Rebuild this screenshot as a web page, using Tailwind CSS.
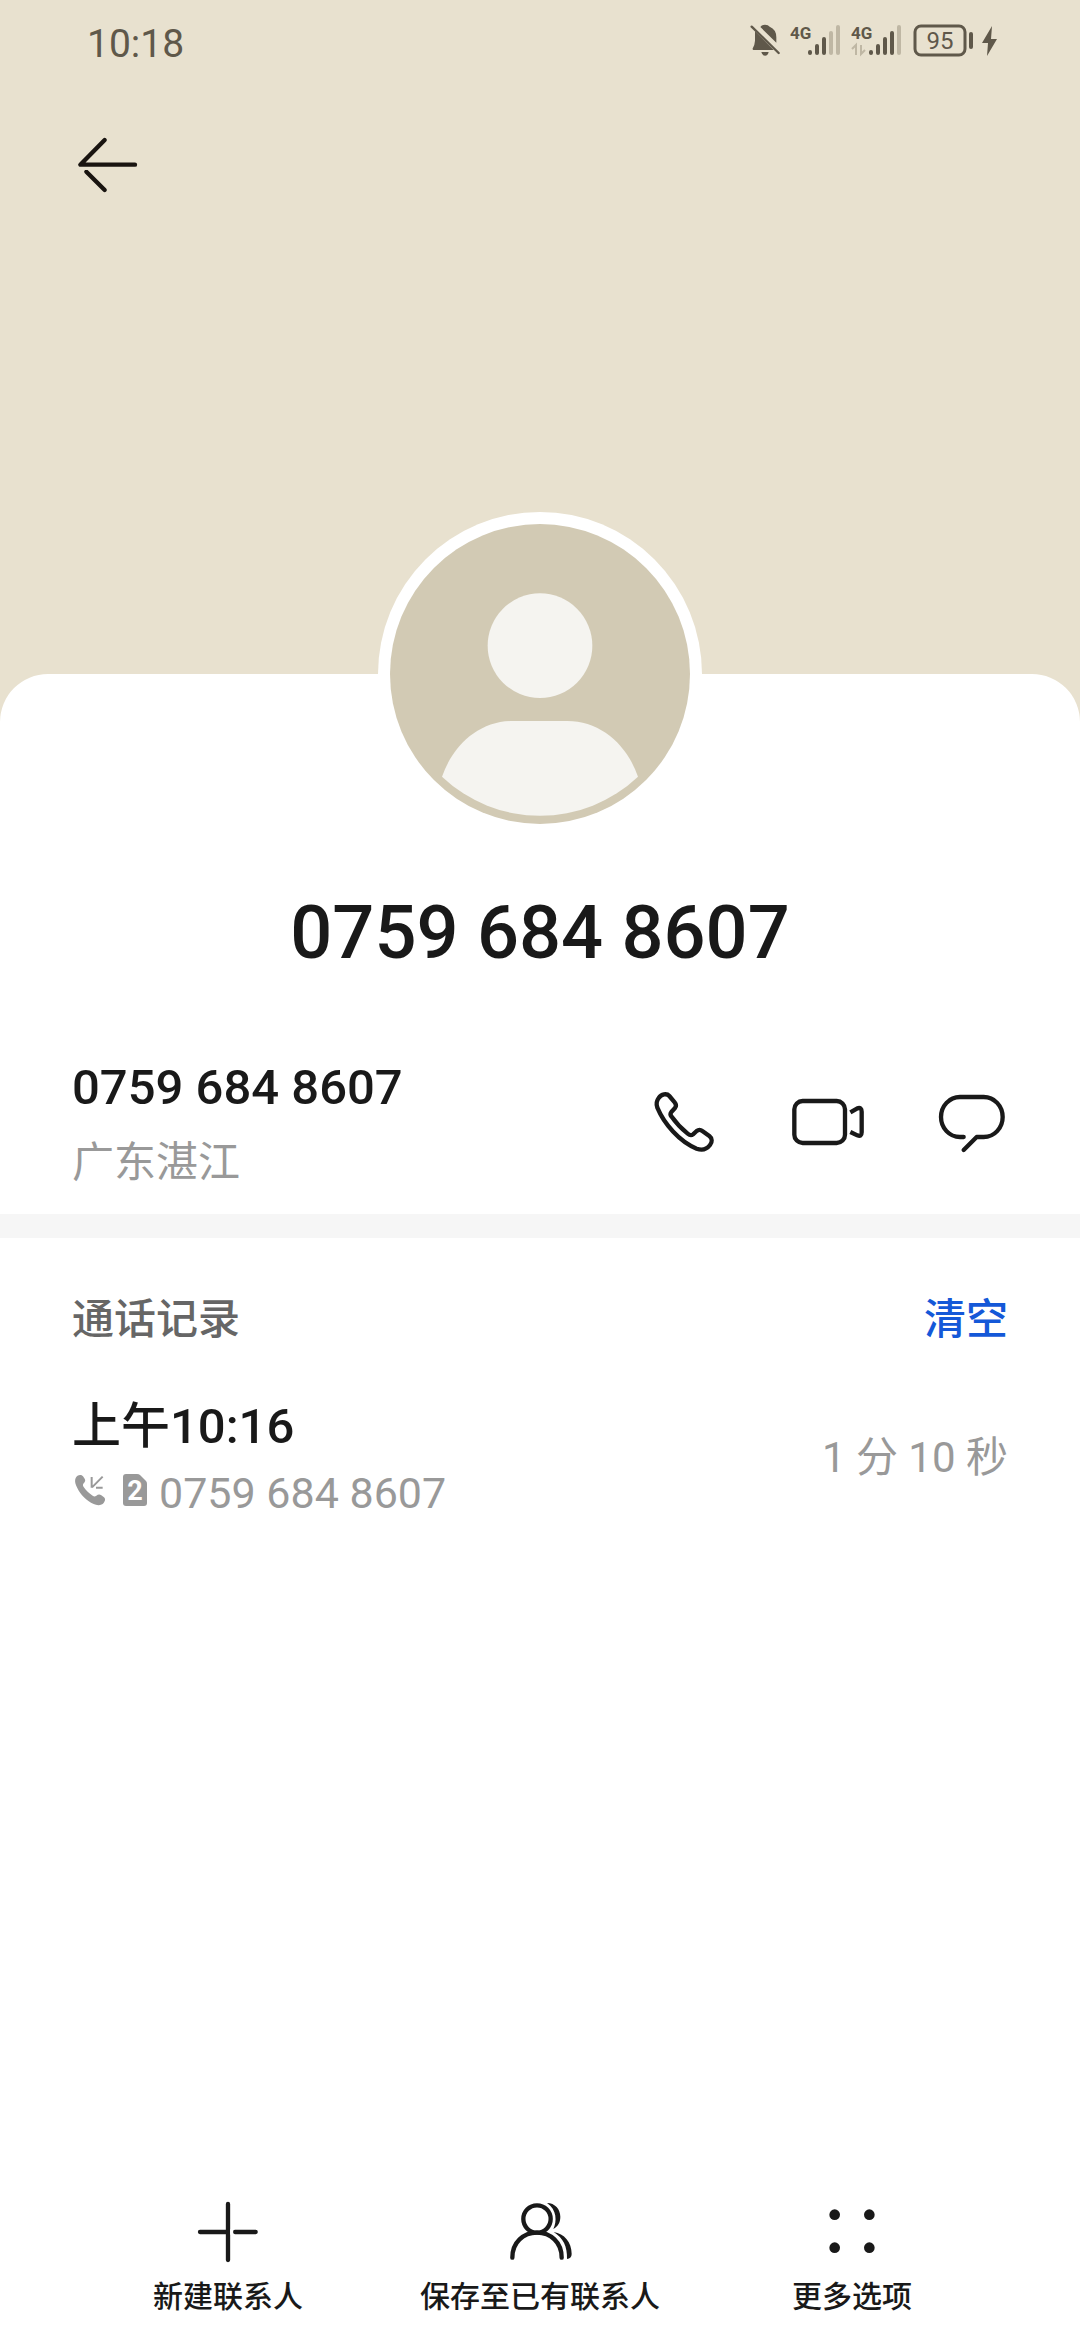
<!DOCTYPE html>
<html lang="zh-CN">
<head>
  <meta charset="UTF-8">
  <meta name="viewport" content="width=device-width, initial-scale=1.0">
  <script src="https://cdn.jsdelivr.net/npm/@tailwindcss/browser@4"></script>
  <title>联系人详情</title>
</head>
<body class="min-h-screen flex flex-col bg-white text-[#191919] font-[Roboto,'Noto_Sans_CJK_SC',sans-serif]">
  <header class="h-[722px] shrink-0 bg-[#e8e1cf]">
    <!-- Status bar -->
    <div class="flex justify-between items-start pt-[21px] pl-[87px] pr-[82px] text-[#5f584a]">
      <span class="text-[39px] leading-[46px]">10:18</span>
      <div class="flex gap-[10px]">
        <svg class="w-[30px] h-[40px]" viewBox="45 33 90 120" fill="currentColor">
          <path d="M60 64 L116 120 H55 Q51 119 54 113 Q59 105 60 92 Z"/>
          <path d="M76 51 Q80 44 90 44 Q100 44 104 50 Q124 58 124 82 V98 Z"/>
          <path d="M79 126 H101 Q99 137 90 137 Q81 137 79 126 Z"/>
          <path d="M50 50 L131 129" fill="none" stroke="currentColor" stroke-width="7" stroke-linecap="round"/>
        </svg>
        <svg class="w-[51px] h-[40px]" viewBox="0 0 51 40" fill="currentColor">
          <text x="0" y="18" font-size="17" font-weight="700">4G</text>
          <g fill="none" stroke="currentColor" stroke-width="4" stroke-linecap="round">
            <path d="M20 31v1M27 25v7M34 18v14"/>
            <path d="M41 12v20M48 6v26" stroke="#bfb7a4"/>
          </g>
        </svg>
        <svg class="w-[51px] h-[40px]" viewBox="0 0 51 40" fill="currentColor">
          <text x="0" y="18" font-size="17" font-weight="700">4G</text>
          <path d="M1 28L5 24V34M10 24V33L14 29" fill="none" stroke="#bfb7a4" stroke-width="2"/>
          <g fill="none" stroke="currentColor" stroke-width="4" stroke-linecap="round">
            <path d="M20 31v1M27 25v7M34 18v14M41 12v20"/>
            <path d="M48 6v26" stroke="#bfb7a4"/>
          </g>
        </svg>
        <svg class="w-[86px] h-[40px]" viewBox="0 0 86 40" fill="currentColor">
          <rect x="3" y="5" width="50" height="29" rx="6" fill="none" stroke="currentColor" stroke-width="3"/>
          <text x="28" y="28" font-size="24" text-anchor="middle">95</text>
          <rect x="57" y="11" width="4" height="17" rx="2"/>
          <path d="M80 5L70 22H76L75 35L85 18H79Z"/>
        </svg>
      </div>
    </div>
    <a href="#" aria-label="返回" class="block w-[72px] ml-[72px] mt-[62px]">
      <svg class="size-[72px]" viewBox="36 357 216 216" fill="none" stroke="#191410" stroke-width="13" stroke-linecap="round" stroke-linejoin="round">
        <path d="M134 390L61 464H225"/>
        <path d="M134 540L79 485"/>
        <path d="M58 473H90L84 480H64Z" fill="#e8e1cf" stroke="none"/>
      </svg>
    </a>
  </header>

  <main class="-mt-[48px] rounded-t-[48px] bg-white">
    <div class="relative mx-auto -mt-[162px] size-[324px] p-3 rounded-full bg-white">
      <svg class="size-[300px]" viewBox="90 75 900 900">
        <circle cx="540" cy="525" r="450" fill="#d2cab4"/>
        <circle cx="540" cy="440" r="157" fill="#f5f4f0"/>
        <path d="M246 833C280 735 360 666 457 666H622C720 666 800 735 834 833A427 427 0 0 1 246 833Z" fill="#f5f4f0"/>
      </svg>
    </div>
    <h1 class="mt-[54px] text-center text-[74px] leading-[86px] font-medium">0759 684 8607</h1>

    <!-- Number and quick actions -->
    <section class="flex items-center justify-between px-[72px] pt-[82px] pb-[23px]">
      <div>
        <p class="text-[49px] leading-[60px] font-medium">0759 684 8607</p>
        <p class="mt-[17px] text-[42px] leading-[56px] text-[#999]">广东湛江</p>
      </div>
      <div class="flex gap-[72px]">
        <button aria-label="拨打电话">
          <svg class="size-[72px]" viewBox="54 51 216 216" fill="none" stroke="currentColor" stroke-width="13" stroke-linejoin="round">
            <path d="M86 78C94 66 110 63 118 72L134 91C139 97 139 103 135 108L124 120C120 125 121 129 124 133C138 153 154 170 173 185C179 190 184 191 189 187L200 177C205 173 212 173 217 177L238 192C247 199 247 210 240 219C230 232 216 236 200 230C148 209 102 155 82 107C78 96 80 86 86 78Z"/>
          </svg>
        </button>
        <button aria-label="视频通话">
          <svg class="size-[72px]" viewBox="486 51 216 216" fill="none" stroke="currentColor" stroke-width="13">
            <rect x="493" y="87" width="152" height="126" rx="25"/>
            <path d="M661 121L682 109Q695 105 695 119V181Q695 195 682 190L661 180" stroke-linejoin="round"/>
          </svg>
        </button>
        <button aria-label="发信息">
          <svg class="size-[72px]" viewBox="918 51 216 216" fill="none" stroke="currentColor" stroke-width="13" stroke-linecap="round" stroke-linejoin="round">
            <path d="M1001 195H990C958 195 933 168 933 135S958 75 990 75H1061C1093 75 1118 102 1118 135S1093 195 1061 195H1040L1001 234"/>
          </svg>
        </button>
      </div>
    </section>

    <div class="h-6 bg-[#f6f6f6]"></div>

    <!-- Call log -->
    <section class="px-[72px] pt-[54px]">
      <div class="flex justify-between text-[42px] leading-[56px] font-medium">
        <h2 class="text-[#666]">通话记录</h2>
        <button class="text-[#1458d8]">清空</button>
      </div>
      <div class="flex items-center justify-between mt-[49px]">
        <div>
          <p class="text-[49px] leading-[60px] font-medium">上午10:16</p>
          <div class="flex items-center gap-3 mt-[10px] text-[#999]">
            <svg class="w-[36px] h-[42px]" viewBox="66 579 108 126" fill="currentColor">
              <path d="M77 597C81 588 93 585 99 592L104 599C108 605 104 609 101 613C98 617 98 620 101 624C108 634 117 643 128 650C132 653 135 653 139 650C144 646 149 645 154 649L162 655C168 660 165 669 158 675C150 681 137 679 123 671C102 659 87 640 79 621C75 612 74 604 77 597Z"/>
              <path d="M158 593L126 625M125 594V626M138 626H158" fill="none" stroke="currentColor" stroke-width="6"/>
            </svg>
            <svg class="w-[27px] h-[42px]" viewBox="0 0 27 42" fill="currentColor">
              <path d="M6 2H17Q19 2 20 3L26 9Q27 10 27 12V31Q27 34 24 34H6Q3 34 3 31V5Q3 2 6 2Z"/>
              <text x="15" y="28" font-size="27" font-weight="700" text-anchor="middle" fill="#fff">2</text>
            </svg>
            <span class="text-[43px] leading-[52px]">0759 684 8607</span>
          </div>
        </div>
        <p class="text-[42px] leading-[52px] text-[#999]">1 分 10 秒</p>
      </div>
    </section>
  </main>

  <nav class="mt-auto grid grid-cols-3 px-[72px] pb-[25px] text-[30px] leading-[36px] font-medium">
    <button class="flex flex-col items-center gap-[11px]">
      <svg class="size-[72px]" viewBox="186 48 216 216" fill="none" stroke="currentColor" stroke-width="13" stroke-linecap="round">
        <path d="M294 72V240M210 156H290M377 156H315"/>
        <path d="M305 148V164" stroke="#fff" stroke-width="9" stroke-linecap="butt"/>
      </svg>
      <span>新建联系人</span>
    </button>
    <button class="flex flex-col items-center gap-[11px]">
      <svg class="size-[72px]" viewBox="312 48 216 216" fill="none" stroke="currentColor" stroke-width="13" stroke-linecap="round">
        <circle cx="411" cy="117" r="41"/>
        <path d="M337 233C337 187 370 158 411 158S485 187 485 233"/>
        <path d="M441 69C465 69 481 88 481 110C481 127 474 139 460 147C471 124 471 89 441 69Z" fill="currentColor" stroke="none"/>
        <path d="M461 156C493 161 515 187 515 222C515 231 510 236 501 237C502 200 490 174 461 156Z" fill="currentColor" stroke="none"/>
      </svg>
      <span>保存至已有联系人</span>
    </button>
    <button class="flex flex-col items-center gap-[11px]">
      <svg class="size-[72px]" viewBox="138 48 216 216" fill="currentColor">
        <circle cx="194" cy="104" r="16"/>
        <circle cx="298" cy="104" r="16"/>
        <circle cx="194" cy="203" r="16"/>
        <circle cx="298" cy="203" r="16"/>
      </svg>
      <span>更多选项</span>
    </button>
  </nav>
</body>
</html>
